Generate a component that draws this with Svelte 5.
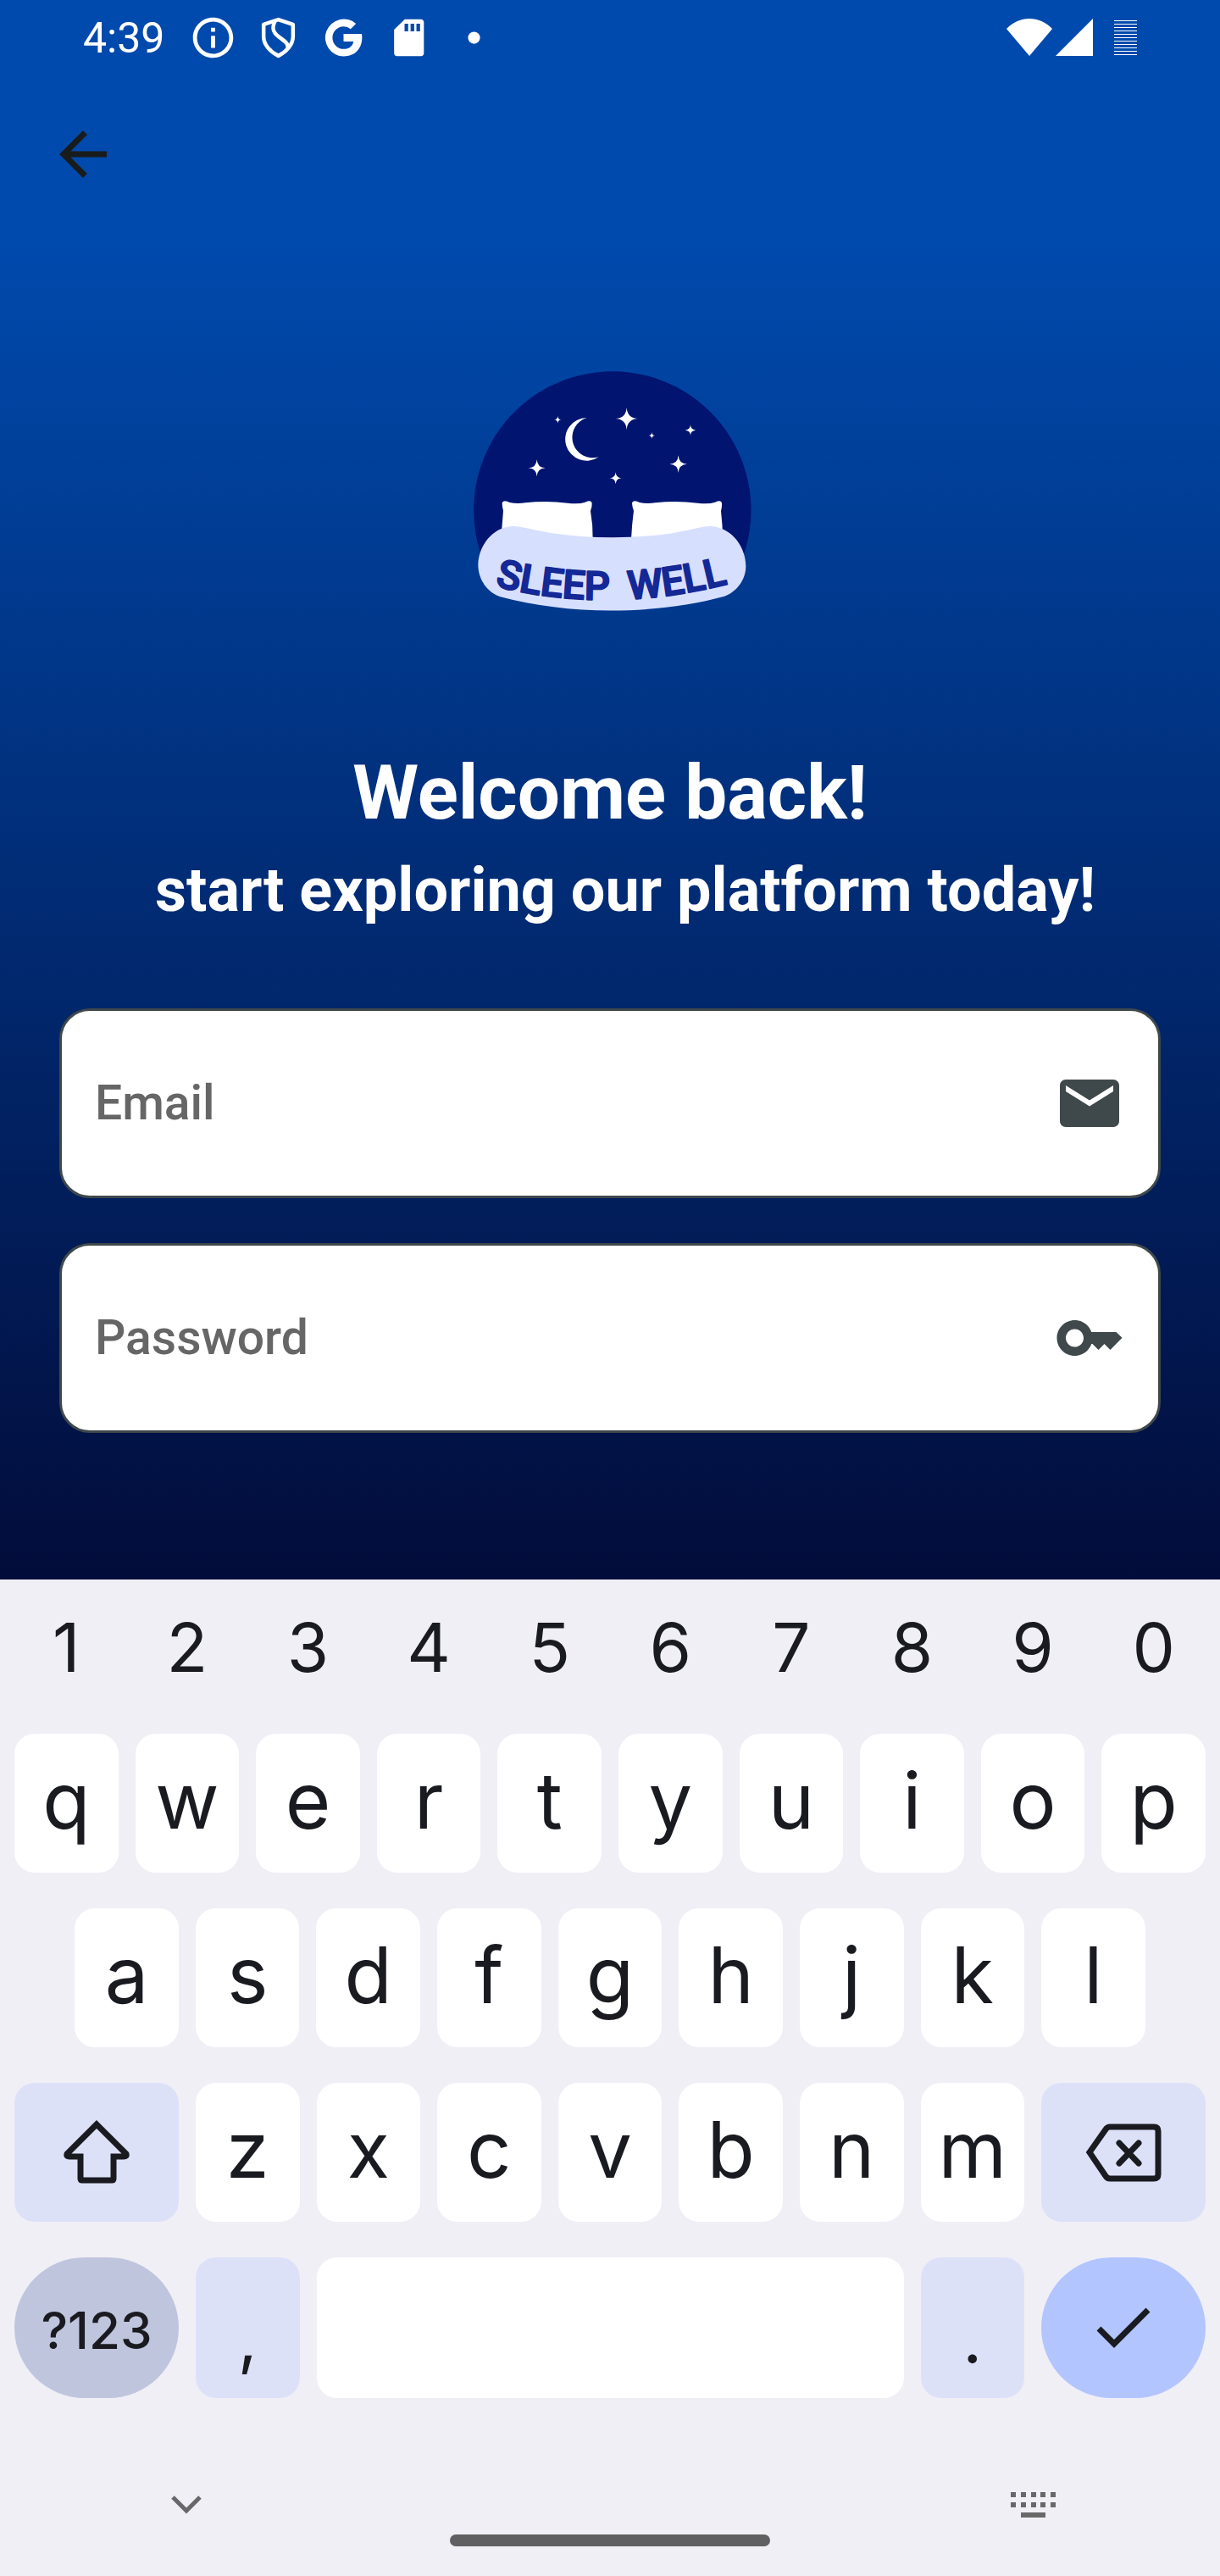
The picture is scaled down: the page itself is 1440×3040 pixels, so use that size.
<script>
  const digits = ['1', '2', '3', '4', '5', '6', '7', '8', '9', '0'];
  const topRow = ['q', 'w', 'e', 'r', 't', 'y', 'u', 'i', 'o', 'p'];
  const homeRow = ['a', 's', 'd', 'f', 'g', 'h', 'j', 'k', 'l'];
  const bottomRow = ['z', 'x', 'c', 'v', 'b', 'n', 'm'];

  const batteryLines = [3, 7, 11, 15, 19, 23, 27, 31, 35, 39, 43];
  const keyDots = [0, 12, 24, 35, 47];

  // x, y and arm length of each star in the logo
  const stars = [
    [599, 222, 40],
    [355, 226, 13],
    [688, 282, 12],
    [825, 263, 19],
    [782, 383, 31],
    [560, 433, 21],
    [281, 397, 30]
  ];

  function starPath([x, y, r]) {
    const k = r * 0.05;
    return `M${x} ${y - r}Q${x + k} ${y - k} ${x + r} ${y}Q${x + k} ${y + k} ${x} ${y + r}Q${x - k} ${y + k} ${x - r} ${y}Q${x - k} ${y - k} ${x} ${y - r}Z`;
  }

  let email = $state('');
  let password = $state('');
</script>

<div class="screen">
  <main class="login">
    <header class="status">
      <span class="clock">4:39</span>
      <div class="notices">
        <svg viewBox="0 0 24 24" aria-hidden="true">
          <path d="M11 7h2v2h-2zm0 4h2v6h-2zm1-9C6.48 2 2 6.48 2 12s4.48 10 10 10 10-4.480 10-10S17.520 2 12 2zm0 18c-4.410 0-8-3.590-8-8s3.590-8 8-8 8 3.590 8 8-3.590 8-8 8z" />
        </svg>
        <svg viewBox="0 0 24 24" aria-hidden="true">
          <g fill="none" stroke="#fff" stroke-width="1.900" stroke-linejoin="round">
            <path d="M12 3L19.300 5.400V11.500C19.300 15.500 16 19 12 21C8 19 4.700 15.500 4.700 11.500V5.400Z" />
            <path d="M10.400 3.700C8.700 7 9.200 9.300 12.200 11.500C15.600 14 17 14.800 16.700 17.300" />
          </g>
        </svg>
        <svg viewBox="0 0 24 24" aria-hidden="true">
          <path d="M12 10.100h9.050c.1.600.15 1.200.15 1.900 0 5.400-3.600 9.250-9.100 9.250A9.250 9.250 0 1 1 18.200 5l-2.700 2.700A5.300 5.300 0 0 0 12.100 6.400 5.600 5.600 0 1 0 12.100 17.600c2.800 0 4.500-1.600 4.850-3.750H12z" />
        </svg>
        <svg viewBox="0 0 24 24" aria-hidden="true">
          <path fill-rule="evenodd" d="M18 2.800H10L4.700 8v11.700c0 .9.600 1.500 1.400 1.500h12c.8 0 1.400-.6 1.400-1.500V4.300c0-.9-.7-1.500-1.500-1.500zM11.700 8.800H9.900V5h1.800zm3 0h-1.800V5h1.800zm2.900 0h-1.800V5h1.800z" />
        </svg>
        <svg viewBox="0 0 24 24" aria-hidden="true"><circle cx="12" cy="12" r="3" /></svg>
      </div>
      <div class="signals">
        <svg width="54" height="44" viewBox="0 0 54 44" aria-hidden="true">
          <path d="M0 12C15-4 39-4 54 12L27 44Z" />
        </svg>
        <svg width="44" height="44" viewBox="0 0 44 44" aria-hidden="true">
          <path d="M44 0V44H0Z" />
        </svg>
        <svg class="battery" width="27" height="46" viewBox="0 0 27 46" aria-hidden="true">
          {#each batteryLines as y}
            <rect x="0" {y} width="27" height="1" />
          {/each}
        </svg>
      </div>
    </header>

    <nav class="appbar">
      <button class="back" type="button" aria-label="Back">
        <svg viewBox="0 0 24 24" aria-hidden="true">
          <path d="M20 11H7.830l5.590-5.590L12 4l-8 8 8 8 1.410-1.410L7.830 13H20v-2z" />
        </svg>
      </button>
    </nav>

    <svg class="logo" viewBox="-15 0 1110 960" role="img" aria-label="Sleep Well">
      <defs>
        <path id="motto" d="M130 814Q545 920 985 800" />
      </defs>
      <path fill="#001470" d="M85 708A491 491 0 1 1 1012 708Z" />
      <path fill="#fff" d="M458 219A76 76 0 1 0 500 358A72 72 0 0 1 458 219Z" />
      {#each stars as star}
        <path fill="#fff" d={starPath(star)} />
      {/each}
      <path fill="#fff" d="M158 520Q164 508 185 519Q210 524 240 520Q315 512 390 521Q430 526 452 518Q474 508 476 522Q477 535 471 549Q480 600 479 650H154Q158 600 162 548Q158 534 158 520Z" />
      <path fill="#fff" d="M618 520Q624 508 645 519Q670 524 700 520Q775 512 850 521Q890 526 912 518Q934 508 936 522Q937 535 933 549Q939 600 939 650H615Q617 600 624 548Q618 534 618 520Z" />
      <path fill="#d7dfff" d="M190 604C220 600 260 616 330 627C470 648 630 648 765 627C835 616 870 600 905 604C975 612 1021 680 1021 745C1021 795 985 838 945 851C700 918 390 918 152 853C108 838 73 795 73 738C76 670 125 608 190 604Z" />
      <text class="motto">
        <textPath href="#motto" startOffset="2">SLEEP</textPath>
      </text>
      <text class="motto">
        <textPath href="#motto" startOffset="480">WELL</textPath>
      </text>
    </svg>

    <h1>Welcome back!</h1>
    <p class="lead">start exploring our platform today!</p>

    <form class="fields">
      <label class="field">
        <input type="email" placeholder="Email" aria-label="Email" bind:value={email} />
        <svg viewBox="0 0 24 24" aria-hidden="true">
          <path d="M20 4H4c-1.100 0-1.990.9-1.990 2L2 18c0 1.100.9 2 2 2h16c1.100 0 2-.9 2-2V6c0-1.100-.9-2-2-2zm0 4l-8 5-8-5V6l8 5 8-5v2z" />
        </svg>
      </label>
      <label class="field">
        <input type="password" placeholder="Password" aria-label="Password" bind:value={password} />
        <svg viewBox="0 0 24 24" aria-hidden="true">
          <path d="M21 10h-8.350C11.830 7.670 9.610 6 7 6c-3.310 0-6 2.690-6 6s2.690 6 6 6c2.610 0 4.830-1.670 5.650-4H13l2 2 2-2 2 2 4-4.040L21 10zM7 15c-1.650 0-3-1.350-3-3s1.350-3 3-3 3 1.350 3 3-1.350 3-3 3z" />
        </svg>
      </label>
    </form>
  </main>

  <section class="keyboard" aria-label="Keyboard">
    <div class="row numbers">
      {#each digits as digit}
        <button class="digit" type="button">{digit}</button>
      {/each}
    </div>
    <div class="row">
      {#each topRow as letter}
        <button class="key" type="button">{letter}</button>
      {/each}
    </div>
    <div class="row home">
      {#each homeRow as letter}
        <button class="key" type="button">{letter}</button>
      {/each}
    </div>
    <div class="row">
      <button class="key wide tinted" type="button" aria-label="Shift">
        <svg width="80" height="80" viewBox="0 0 80 80" aria-hidden="true">
          <path stroke-width="7" d="M40 7L75 42Q76 45 72 45H60V71Q60 73 58 73H23Q21 73 21 71V45H8Q4 45 5 42Z" />
        </svg>
      </button>
      {#each bottomRow as letter}
        <button class="key" type="button">{letter}</button>
      {/each}
      <button class="key wide tinted" type="button" aria-label="Delete">
        <svg width="90" height="72" viewBox="0 0 90 72" aria-hidden="true">
          <path stroke-width="7" d="M5 36L24 9Q26 6 29 6H81Q86 6 86 11V62Q86 67 81 67H29Q26 67 24 64Z" />
          <path stroke-width="7" stroke-linecap="round" d="M40 25L63 49M63 25L40 49" />
        </svg>
      </button>
    </div>
    <div class="row last">
      <button class="key wide symbols" type="button">?123</button>
      <button class="key tinted mark" type="button">,</button>
      <button class="key space" type="button" aria-label="Space"></button>
      <button class="key tinted mark" type="button">.</button>
      <button class="key wide enter" type="button" aria-label="Done">
        <svg width="64" height="52" viewBox="0 0 64 52" aria-hidden="true">
          <path stroke-width="7" d="M3 27L21 45L61 5" />
        </svg>
      </button>
    </div>

    <footer class="navbar">
      <button class="tool" type="button" aria-label="Hide keyboard">
        <svg width="36" height="24" viewBox="0 0 36 24" aria-hidden="true">
          <path fill="none" stroke="#68686b" stroke-width="5" d="M2 3L18 19L34 3" />
        </svg>
      </button>
      <span class="handle"></span>
      <button class="tool" type="button" aria-label="Switch keyboard">
        <svg width="54" height="30" viewBox="0 0 54 30" fill="#68686b" aria-hidden="true">
          {#each keyDots as x}
            <rect {x} y="0" width="6" height="6" />
            <rect {x} y="12" width="6" height="6" />
          {/each}
          <rect x="12" y="24" width="29" height="6" />
        </svg>
      </button>
    </footer>
  </section>
</div>

<style>
  :global(body) {
    margin: 0;
  }

  .screen {
    display: flex;
    flex-direction: column;
    min-height: 100vh;
    font-family: Roboto, sans-serif;
  }

  button {
    margin: 0;
    padding: 0;
    border: 0;
    background: none;
    color: inherit;
    font: inherit;
  }

  svg {
    display: block;
    flex: none;
  }

  .login {
    display: flex;
    flex: 1;
    flex-direction: column;
    padding-bottom: 173px;
    background: linear-gradient(#004aad 15%, #020c3a);
    color: #fff;
    box-sizing: border-box;
  }

  .status {
    display: flex;
    align-items: center;
    height: 88px;
    padding: 0 98px;
    fill: #fff;
  }

  .clock {
    padding-top: 2px;
    font-size: 50px;
    line-height: 56px;
  }

  .notices {
    display: flex;
    gap: 20px;
    margin-left: 29px;
  }

  .notices svg {
    width: 57px;
    height: 57px;
  }

  .signals {
    display: flex;
    align-items: center;
    gap: 4px;
    margin-left: auto;
  }

  .battery {
    margin-left: 21px;
  }

  .appbar {
    display: flex;
    align-items: center;
    height: 188px;
    padding: 0 56px;
  }

  .back svg {
    width: 84px;
    height: 84px;
    fill: #191c1c;
  }

  .logo {
    width: 370px;
    height: 320px;
    margin: 144px auto;
  }

  .motto {
    font-family: Roboto, sans-serif;
    font-size: 141px;
    font-weight: 500;
    fill: #142896;
    stroke: #142896;
    stroke-width: 6px;
    stroke-linejoin: round;
  }

  h1 {
    margin: 0;
    font-size: 89px;
    font-weight: 700;
    line-height: 104px;
    text-align: center;
  }

  .lead {
    margin: 22px 0 98px;
    padding-left: 36px;
    font-size: 72px;
    font-weight: 700;
    line-height: 82px;
    text-align: center;
  }

  .fields {
    display: flex;
    flex-direction: column;
    gap: 53px;
    padding: 0 70px;
  }

  .field {
    display: flex;
    align-items: center;
    height: 224px;
    padding: 0 39px;
    border: 3px solid #3f484a;
    border-radius: 36px;
    background: #fff;
    box-sizing: border-box;
  }

  .field input {
    flex: 1;
    min-width: 0;
    padding: 0;
    border: 0;
    outline: 0;
    background: none;
    color: #191c1c;
    font: 500 57px/66px Roboto, sans-serif;
  }

  .field input::placeholder {
    color: #666;
    opacity: 1;
  }

  .field svg {
    width: 84px;
    height: 84px;
    fill: #3f484a;
  }

  .keyboard {
    display: flex;
    flex-direction: column;
    gap: 42px;
    padding: 20px 7px 0;
    background: #f0eff6;
    color: #1a1b20;
    font-family: Inter, sans-serif;
  }

  .row {
    display: grid;
    grid-template-columns: repeat(20, 1fr);
    grid-auto-rows: 164px;
  }

  .numbers {
    grid-auto-rows: 120px;
  }

  .home {
    padding: 0 5%;
    grid-template-columns: repeat(18, 1fr);
  }

  .last {
    grid-auto-rows: 166px;
  }

  .digit,
  .key {
    grid-column: span 2;
    margin: 0 10px;
  }

  .digit {
    font-size: 80px;
    line-height: 96px;
  }

  .key {
    display: flex;
    align-items: center;
    justify-content: center;
    padding-bottom: 6px;
    border-radius: 24px;
    background: #fff;
    font-size: 92px;
    line-height: 112px;
  }

  .key svg {
    fill: none;
    stroke: #1a1b20;
  }

  .wide {
    grid-column: span 3;
    padding: 0;
  }

  .tinted {
    background: #dde1f8;
  }

  .symbols {
    padding-top: 6px;
    border-radius: 83px;
    background: #c0c5de;
    font-size: 60px;
    font-weight: 500;
    line-height: 76px;
  }

  .mark {
    padding: 24px 0 0;
    font-size: 80px;
    line-height: 96px;
  }

  .space {
    grid-column: span 10;
  }

  .enter {
    border-radius: 83px;
    background: #b3c5ff;
  }

  .navbar {
    display: flex;
    align-items: center;
    justify-content: space-between;
    height: 168px;
    padding: 0 185px;
  }

  .tool {
    display: flex;
    align-items: center;
    justify-content: center;
    width: 56px;
    height: 56px;
  }

  .handle {
    align-self: flex-end;
    width: 378px;
    height: 14px;
    margin-bottom: 35px;
    border-radius: 7px;
    background: #606062;
  }
</style>
